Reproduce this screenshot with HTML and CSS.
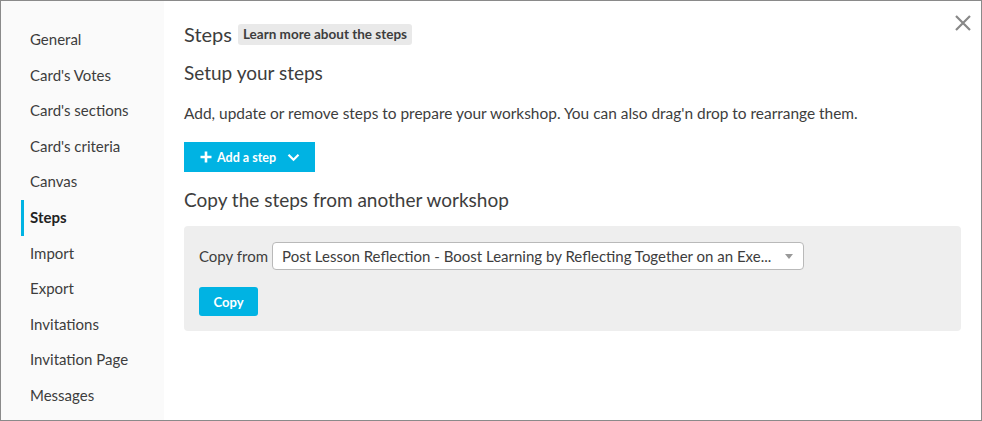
FILE: index.html
```html
<!DOCTYPE html>
<html>
<head>
<meta charset="utf-8">
<link rel="stylesheet" href="styles.css">
</head>
<body>
<div class="frame">
  <nav class="sidebar">
    <a class="nav-item">General</a>
    <a class="nav-item">Card's Votes</a>
    <a class="nav-item">Card's sections</a>
    <a class="nav-item">Card's criteria</a>
    <a class="nav-item">Canvas</a>
    <a class="nav-item active">Steps</a>
    <a class="nav-item">Import</a>
    <a class="nav-item">Export</a>
    <a class="nav-item">Invitations</a>
    <a class="nav-item">Invitation Page</a>
    <a class="nav-item">Messages</a>
  </nav>
  <main class="content">
    <div class="title-row">
      <h1 class="title">Steps</h1>
      <span class="badge">Learn more about the steps</span>
    </div>
    <h2 class="subtitle">Setup your steps</h2>
    <p class="desc">Add, update or remove steps to prepare your workshop. You can also drag'n drop to rearrange them.</p>
    <button class="add-btn">
      <svg class="plus" width="12" height="12" viewBox="0 0 12 12"><path d="M6 0.5v11M0.5 6h11" stroke="#fff" stroke-width="2.6"/></svg>
      <span>Add a step</span>
      <svg class="chev" width="13" height="9" viewBox="0 0 13 9"><path d="M1.5 1.8l5 5 5-5" stroke="#fff" stroke-width="2.2" fill="none"/></svg>
    </button>
    <h2 class="subtitle copy-title">Copy the steps from another workshop</h2>
    <div class="panel">
      <div class="copy-row">
        <label class="copy-label">Copy from</label>
        <div class="select">
          <span class="select-text">Post Lesson Reflection - Boost Learning by Reflecting Together on an Exe...</span>
          <span class="caret"></span>
        </div>
      </div>
      <button class="copy-btn">Copy</button>
    </div>
  </main>
  <button class="close" aria-label="close">
    <svg width="18" height="18" viewBox="0 0 18 18"><path d="M2 2l14 14M16 2L2 16" stroke="#888" stroke-width="2.2"/></svg>
  </button>
</div>
</body>
</html>
```
FILE: styles.css
```css
* { box-sizing: border-box; }
html, body { margin: 0; padding: 0; background: #fff; }
body { font-family: "Lato", "Noto Sans", sans-serif; color: #3d3d3d; }
.frame {
  position: relative;
  width: 982px;
  height: 421px;
  border: 1px solid #8a8a8a;
  display: flex;
  overflow: hidden;
}
.sidebar {
  width: 163px;
  background: #fafafa;
  display: flex;
  flex-direction: column;
  padding-top: 21px;
}
.nav-item {
  display: block;
  height: 35.6px;
  line-height: 35.6px;
  padding-left: 29px;
  font-size: 15px;
  color: #3d3d3d;
  position: relative;
}
.nav-item.active { font-weight: 700; color: #222; }
.nav-item.active::before {
  content: "";
  position: absolute;
  left: 20px;
  top: 0;
  width: 3px;
  height: 100%;
  background: #00b3e3;
}
.content {
  flex: 1;
  padding: 21px 20px 0 20px;
}
.title-row { display: flex; align-items: center; gap: 6px; height: 24px; }
.title { margin: 0; font-size: 20px; font-weight: 400; color: #3d3d3d; }
.badge {
  background: #e9e9e9;
  border-radius: 3px;
  font-size: 13.5px;
  font-weight: 700;
  color: #3d3d3d;
  padding: 2px 5px;
  line-height: 17px;
}
.subtitle { margin: 0; font-size: 19px; font-weight: 400; color: #3d3d3d; }
.title-row + .subtitle { margin-top: 15px; }
.desc { margin: 20px 0 0 0; font-size: 15.45px; }
.add-btn {
  margin-top: 20px;
  height: 30px;
  width: 131px;
  background: #00b3e3;
  border: none;
  color: #fff;
  font-family: inherit;
  font-size: 12.5px;
  font-weight: 700;
  display: flex;
  align-items: center;
  padding: 0 0 0 16px;
  gap: 5px;
}
.add-btn .chev { margin-left: 6px; }
.copy-title { margin-top: 16px; }
.panel {
  margin-top: 15px;
  width: 777px;
  height: 105px;
  background: #eeeeee;
  border-radius: 4px;
  padding: 16px 15px 0 15px;
}
.copy-row { display: flex; align-items: center; gap: 4px; }
.copy-label { font-size: 15px; }
.select {
  width: 532px;
  height: 28px;
  background: #fff;
  border: 1px solid #b9b9b9;
  border-radius: 4px;
  display: flex;
  align-items: center;
  padding: 0 10px 0 9px;
  font-size: 15px;
}
.select-text { flex: 1; white-space: nowrap; overflow: hidden; }
.caret {
  width: 0; height: 0;
  border-left: 4px solid transparent;
  border-right: 4px solid transparent;
  border-top: 5px solid #999;
}
.copy-btn {
  margin-top: 17px;
  width: 59px;
  height: 29px;
  background: #00b3e3;
  border: none;
  border-radius: 3px;
  color: #fff;
  font-family: inherit;
  font-size: 13px;
  font-weight: 700;
}
.close {
  position: absolute;
  right: 9px;
  top: 13px;
  background: none;
  border: none;
  padding: 0;
  width: 18px;
  height: 18px;
}
```
